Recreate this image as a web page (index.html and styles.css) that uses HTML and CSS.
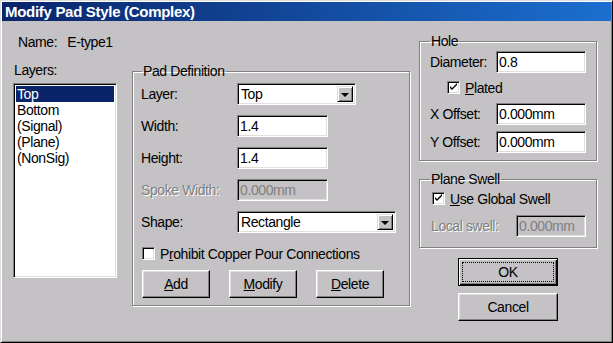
FILE: index.html
```html
<!DOCTYPE html>
<html lang="en">
<head>
  <meta charset="UTF-8" />
  <title>Modify Pad Style (Complex)</title>
  <link rel="stylesheet" href="styles.css">
</head>
<body>
  <div class="window">
    <div class="titlebar">Modify Pad Style (Complex)</div>

    <div class="content">
      <div class="left">
        <div class="name-row"><span>Name:</span><span>E-type1</span></div>

        <div class="main-row">
          <div class="layers">
            <div class="layers-label">Layers:</div>
            <ul class="listbox">
              <li class="selected">Top</li>
              <li>Bottom</li>
              <li>(Signal)</li>
              <li>(Plane)</li>
              <li>(NonSig)</li>
            </ul>
          </div>

          <fieldset class="group pad-group">
            <legend>Pad Definition</legend>
            <div class="row">
              <label class="pad-label">Layer:</label>
              <div class="combo layer-combo"><span class="combo-text">Top</span><span class="drop"><span class="arrow"></span></span></div>
            </div>
            <div class="row">
              <label class="pad-label">Width:</label>
              <input class="edit pad-edit" type="text" value="1.4" />
            </div>
            <div class="row">
              <label class="pad-label">Height:</label>
              <input class="edit pad-edit" type="text" value="1.4" />
            </div>
            <div class="row">
              <label class="pad-label disabled">Spoke Width:</label>
              <input class="edit pad-edit" type="text" value="0.000mm" disabled />
            </div>
            <div class="row">
              <label class="pad-label">Shape:</label>
              <div class="combo shape-combo"><span class="combo-text">Rectangle</span><span class="drop"><span class="arrow"></span></span></div>
            </div>
            <div class="check-row prohibit">
              <span class="check"></span>
              <span>P<u>r</u>ohibit Copper Pour Connections</span>
            </div>
            <div class="pad-buttons">
              <button class="btn pad-btn"><u>A</u>dd</button>
              <button class="btn pad-btn"><u>M</u>odify</button>
              <button class="btn pad-btn"><u>D</u>elete</button>
            </div>
          </fieldset>
        </div>
      </div>

      <div class="right">
        <fieldset class="group hole-group">
          <legend>Hole</legend>
          <div class="row tall">
            <label class="hole-label">Diameter:</label>
            <input class="edit hole-edit" type="text" value="0.8" />
          </div>
          <div class="check-row plated">
            <span class="check"><svg width="11" height="11" viewBox="0 0 11 11"><path d="M2 4 L2 6 L4 8 L9 3 L9 1 L4 6 Z" fill="#000"/></svg></span>
            <span><u>P</u>lated</span>
          </div>
          <div class="row xoff">
            <label class="hole-label">X Offset:</label>
            <input class="edit hole-edit" type="text" value="0.000mm" />
          </div>
          <div class="row yoff">
            <label class="hole-label">Y Offset:</label>
            <input class="edit hole-edit" type="text" value="0.000mm" />
          </div>
        </fieldset>

        <fieldset class="group swell-group">
          <legend>Plane Swell</legend>
          <div class="check-row global">
            <span class="check"><svg width="11" height="11" viewBox="0 0 11 11"><path d="M2 4 L2 6 L4 8 L9 3 L9 1 L4 6 Z" fill="#000"/></svg></span>
            <span><u>U</u>se Global Swell</span>
          </div>
          <div class="row local">
            <label class="swell-label disabled">Local swell:</label>
            <input class="edit swell-edit" type="text" value="0.000mm" disabled />
          </div>
        </fieldset>

        <button class="btn default ok-btn"><span class="focus">OK</span></button>
        <button class="btn cancel-btn">Cancel</button>
      </div>
    </div>
  </div>
</body>
</html>
```

FILE: styles.css
```css
body {
  margin: 0;
  font-family: "Liberation Sans", Arial, sans-serif;
  font-size: 14px;
  letter-spacing: -0.4px;
  color: #000;
  background: #c4c2c4;
}
.window {
  width: 613px;
  height: 343px;
  box-sizing: border-box;
  padding: 1px;
  background: #c4c2c4;
  border: 1px solid;
  border-color: #dfdfdf #000 #000 #dfdfdf;
  box-shadow: inset 1px 1px #fff, inset -1px -1px #808080;
  overflow: hidden;
}
.titlebar {
  height: 19px;
  line-height: 19px;
  padding-left: 3px;
  color: #fff;
  font-weight: bold;
  font-size: 15px;
  letter-spacing: -0.3px;
  background: linear-gradient(to right, #0a246a, #1b6fcf);
}
.content {
  display: flex;
  gap: 9px;
  padding: 0 14px 0 11px;
}
.left {
  width: 397px;
}
.name-row {
  display: flex;
  gap: 10px;
  margin-top: 13px;
  padding-left: 5px;
  line-height: 16px;
}
.main-row {
  display: flex;
  align-items: flex-start;
  gap: 15px;
}
.layers {
  width: 104px;
  margin-top: 12px;
}
.layers-label {
  line-height: 16px;
  padding-left: 1px;
  margin-bottom: 5px;
}
.listbox {
  list-style: none;
  margin: 0;
  padding: 2px;
  height: 195px;
  box-sizing: border-box;
  background: #fff;
  border: 1px solid;
  border-color: #808080 #fff #fff #808080;
  box-shadow: inset 1px 1px #000, inset -1px -1px #dfdfdf;
}
.listbox li {
  height: 16px;
  line-height: 16px;
  padding-left: 1px;
}
.listbox li.selected {
  background: #0a246a;
  color: #fff;
}

/* group boxes */
.group {
  margin: 0;
  min-width: 0;
  border: 1px solid #808080;
  box-shadow: inset 1px 1px #fff, 1px 1px #fff;
}
.group legend {
  padding: 0 1px;
  line-height: 16px;
}
.pad-group {
  width: 278px;
  box-sizing: border-box;
  margin-top: 13px;
  padding: 4px 8px 7px 8px;
}
.pad-group legend {
  margin-left: 1px;
}
.row {
  display: flex;
  align-items: center;
  height: 22px;
}
.pad-group .row + .row {
  margin-top: 10px;
}
.pad-label {
  width: 96px;
}
.disabled {
  color: #808080;
  text-shadow: 1px 1px #fff;
}

/* sunken controls */
.edit, .combo {
  box-sizing: border-box;
  height: 22px;
  background: #fff;
  border: 1px solid;
  border-color: #808080 #fff #fff #808080;
  box-shadow: inset 1px 1px #000, inset -1px -1px #dfdfdf;
  font: inherit;
  letter-spacing: inherit;
  color: #000;
  margin: 0;
  padding: 0 2px;
  outline: none;
}
.edit:disabled {
  background: #c4c2c4;
  color: #808080;
}
.pad-edit {
  width: 91px;
}
.combo {
  display: flex;
  align-items: center;
  padding: 2px;
}
.combo-text {
  flex: 1;
  padding-left: 1px;
}
.layer-combo {
  width: 119px;
}
.shape-combo {
  width: 159px;
}
.drop {
  width: 16px;
  height: 16px;
  box-sizing: border-box;
  background: #c4c2c4;
  border: 1px solid;
  border-color: #dfdfdf #000 #000 #dfdfdf;
  box-shadow: inset 1px 1px #fff, inset -1px -1px #808080;
  display: flex;
  align-items: center;
  justify-content: center;
}
.arrow {
  width: 0;
  height: 0;
  border-left: 4px solid transparent;
  border-right: 4px solid transparent;
  border-top: 4px solid #000;
  margin-top: 1px;
}

/* checkboxes */
.check-row {
  display: flex;
  align-items: center;
  gap: 5px;
  height: 15px;
}
.check {
  width: 13px;
  height: 13px;
  box-sizing: border-box;
  background: #fff;
  border: 1px solid;
  border-color: #808080 #fff #fff #808080;
  box-shadow: inset 1px 1px #000, inset -1px -1px #dfdfdf;
  display: flex;
  align-items: center;
  justify-content: center;
}
.prohibit {
  margin-top: 13px;
  padding-left: 1px;
}

/* buttons */
.btn {
  box-sizing: border-box;
  background: #c4c2c4;
  border: 1px solid;
  border-color: #fff #000 #000 #fff;
  box-shadow: inset -1px -1px #808080, inset 1px 1px #dfdfdf;
  font: inherit;
  letter-spacing: inherit;
  color: #000;
  padding: 0;
}
.pad-buttons {
  display: flex;
  gap: 19px;
  margin-top: 9px;
  padding-left: 1px;
}
.pad-btn {
  width: 68px;
  height: 28px;
}

/* right column */
.right {
  width: 178px;
  display: flex;
  flex-direction: column;
  align-items: center;
}
.hole-group, .swell-group {
  width: 178px;
  box-sizing: border-box;
}
.hole-group {
  margin-top: 12px;
  padding: 1px 10px 7px 10px;
}
.hole-label {
  width: 66px;
}
.hole-edit {
  width: 90px;
}
.row.tall {
  height: 23px;
}
.plated {
  margin-top: 7px;
  padding-left: 17px;
}
.xoff {
  margin-top: 8px;
}
.yoff {
  margin-top: 6px;
}
.swell-group {
  margin-top: 10px;
  padding: 4px 10px 10px 10px;
}
.global {
  padding-left: 2px;
}
.local {
  margin-top: 9px;
}
.swell-label {
  width: 86px;
  padding-left: 1px;
}
.swell-edit {
  width: 70px;
}
.ok-btn, .cancel-btn {
  width: 100px;
  height: 28px;
}
.ok-btn {
  margin-top: 10px;
  display: flex;
  padding: 3px;
  border-color: #000;
  box-shadow: inset 1px 1px #fff, inset -1px -1px #000, inset -2px -2px #808080;
}
.focus {
  flex: 1;
  display: flex;
  align-items: center;
  justify-content: center;
  border: 1px dotted #000;
}
.cancel-btn {
  margin-top: 7px;
}
```
